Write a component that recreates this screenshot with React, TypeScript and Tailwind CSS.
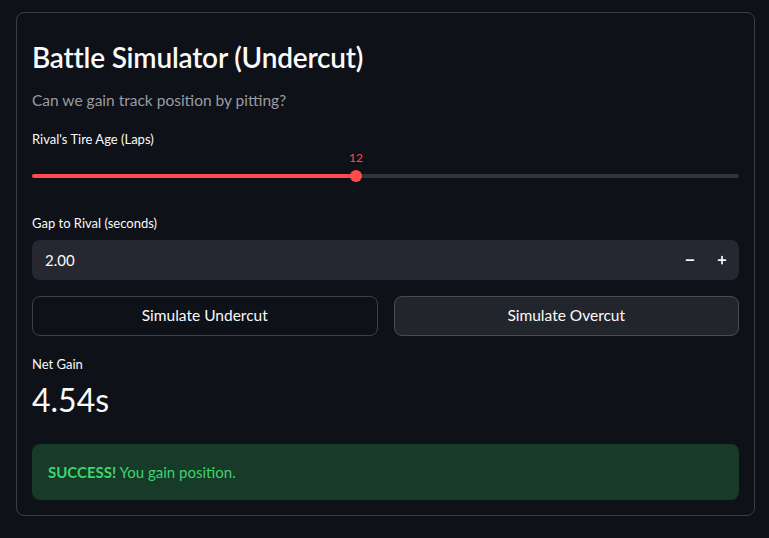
import { Minus, Plus } from "lucide-react";

const FONT = { fontFamily: '"Source Sans Pro", Lato, "Noto Sans", sans-serif' };

function Slider({ value, min, max }: { value: number; min: number; max: number }) {
  const pct = ((value - min) / (max - min)) * 100;
  return (
    <div className="relative mt-[1px] h-8">
      <div className="absolute left-0 right-0 top-[24px] h-1 rounded-full bg-[#31333f]" />
      <div className="absolute left-0 top-[24px] h-1 rounded-full bg-[#ff4b4b]" style={{ width: `${pct}%` }} />
      <div
        className="absolute top-[20px] h-3 w-3 -translate-x-1/2 rounded-full bg-[#ff4b4b]"
        style={{ left: `${pct}%` }}
      />
      <div
        className="absolute top-0 -translate-x-1/2 text-[12px] leading-4 text-[#ff4b4b]"
        style={{ left: `${pct}%` }}
      >
        {value}
      </div>
    </div>
  );
}

export default function App() {
  return (
    <div className="min-h-screen bg-[#0e1117] px-4 pt-3 text-[#fafafa]" style={FONT}>
      <div className="w-[739px] rounded-lg border border-[#3b3e47] px-[15px] pb-[15px] pt-[26px]">
        <h2 className="text-[28px] font-semibold leading-9 tracking-[-0.2px]">Battle Simulator (Undercut)</h2>

        <p className="mt-[15px] text-[15.5px] leading-5 text-[#9a9ca3]">Can we gain track position by pitting?</p>

        <label className="mt-[19px] block text-[13px] leading-5">Rival's Tire Age (Laps)</label>
        <Slider value={12} min={1} max={25} />

        <label className="mt-[31px] block text-[13px] leading-5">Gap to Rival (seconds)</label>
        <div className="mt-[7px] flex h-10 items-center rounded-lg bg-[#262730] pl-[13px] pr-[1px]">
          <span className="flex-1 text-[15px]">2.00</span>
          <button className="flex h-8 w-8 items-center justify-center">
            <Minus size={12} strokeWidth={3.5} />
          </button>
          <button className="flex h-8 w-8 items-center justify-center">
            <Plus size={12} strokeWidth={3.5} />
          </button>
        </div>

        <div className="mt-4 grid grid-cols-2 gap-4">
          <button className="h-10 rounded-lg border border-[#3f414a] bg-[#0e1117] text-[15.5px]">
            Simulate Undercut
          </button>
          <button className="h-10 rounded-lg border border-[#4a4c55] bg-[#23252d] text-[15.5px]">
            Simulate Overcut
          </button>
        </div>

        <div className="mt-[18px] text-[13px] leading-5">Net Gain</div>
        <div className="mt-[2px] text-[32px] leading-[48px]">4.54s</div>

        <div className="mt-5 flex h-14 items-center rounded-lg bg-[#173a29] px-4 text-[15px] text-[#3dd56d]">
          <span>
            <span className="font-bold">SUCCESS!</span> You gain position.
          </span>
        </div>
      </div>
    </div>
  );
}
